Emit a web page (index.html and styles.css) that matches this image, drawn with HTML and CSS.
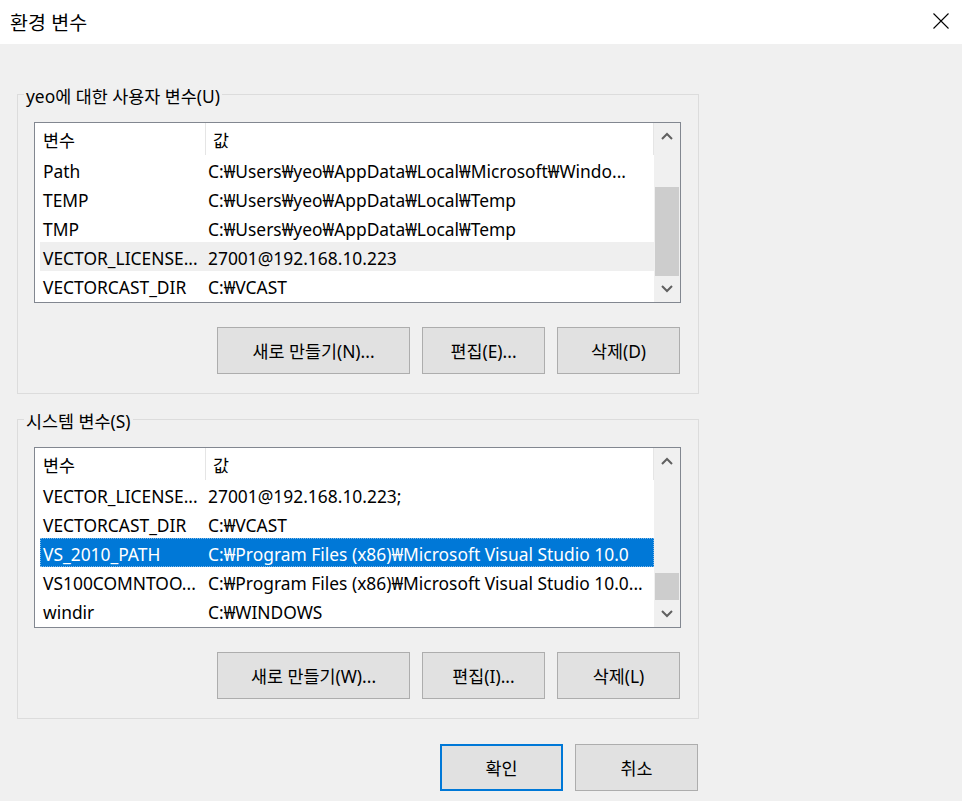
FILE: index.html
```
<!DOCTYPE html>
<html lang="ko">
<head>
<meta charset="utf-8">
<title>환경 변수</title>
<link rel="stylesheet" href="styles.css">
</head>
<body>
<div class="titlebar">
  <span class="title">환경 변수</span>
  <svg class="close" width="16" height="16" viewBox="0 0 16 16"><path d="M0.5 0.5 L15.5 15.5 M15.5 0.5 L0.5 15.5" stroke="#000" stroke-width="1.1" fill="none"/></svg>
</div>
<div class="content">
  <fieldset class="group">
    <legend>yeo에 대한 사용자 변수(U)</legend>
    <div class="list">
      <div class="list-main">
        <div class="row header"><span class="c1">변수</span><span class="c2">값</span><span class="hend"></span></div>
        <div class="row"><span class="c1">Path</span><span class="c2">C:₩Users₩yeo₩AppData₩Local₩Microsoft₩Windo...</span></div>
        <div class="row"><span class="c1">TEMP</span><span class="c2">C:₩Users₩yeo₩AppData₩Local₩Temp</span></div>
        <div class="row"><span class="c1">TMP</span><span class="c2">C:₩Users₩yeo₩AppData₩Local₩Temp</span></div>
        <div class="row hover"><span class="c1">VECTOR_LICENSE...</span><span class="c2">27001@192.168.10.223</span></div>
        <div class="row"><span class="c1">VECTORCAST_DIR</span><span class="c2">C:₩VCAST</span></div>
      </div>
      <div class="scrollbar">
        <div class="sb-btn"><svg width="12" height="8" viewBox="0 0 12 8"><path d="M1 7 L6 2 L11 7" stroke="#606060" stroke-width="2" fill="none"/></svg></div>
        <div class="sb-track end"><div class="thumb t1"></div></div>
        <div class="sb-btn"><svg width="12" height="8" viewBox="0 0 12 8"><path d="M1 1 L6 6 L11 1" stroke="#606060" stroke-width="2" fill="none"/></svg></div>
      </div>
    </div>
    <div class="btnrow">
      <button class="btn wide">새로 만들기(N)...</button>
      <button class="btn">편집(E)...</button>
      <button class="btn">삭제(D)</button>
    </div>
  </fieldset>

  <fieldset class="group second">
    <legend>시스템 변수(S)</legend>
    <div class="list">
      <div class="list-main">
        <div class="row header"><span class="c1">변수</span><span class="c2">값</span><span class="hend"></span></div>
        <div class="row"><span class="c1">VECTOR_LICENSE...</span><span class="c2">27001@192.168.10.223;</span></div>
        <div class="row"><span class="c1">VECTORCAST_DIR</span><span class="c2">C:₩VCAST</span></div>
        <div class="row selected"><span class="c1">VS_2010_PATH</span><span class="c2">C:₩Program Files (x86)₩Microsoft Visual Studio 10.0</span></div>
        <div class="row"><span class="c1">VS100COMNTOO...</span><span class="c2">C:₩Program Files (x86)₩Microsoft Visual Studio 10.0...</span></div>
        <div class="row"><span class="c1">windir</span><span class="c2">C:₩WINDOWS</span></div>
      </div>
      <div class="scrollbar">
        <div class="sb-btn"><svg width="12" height="8" viewBox="0 0 12 8"><path d="M1 7 L6 2 L11 7" stroke="#606060" stroke-width="2" fill="none"/></svg></div>
        <div class="sb-track end"><div class="thumb t2"></div></div>
        <div class="sb-btn"><svg width="12" height="8" viewBox="0 0 12 8"><path d="M1 1 L6 6 L11 1" stroke="#606060" stroke-width="2" fill="none"/></svg></div>
      </div>
    </div>
    <div class="btnrow">
      <button class="btn wide">새로 만들기(W)...</button>
      <button class="btn">편집(I)...</button>
      <button class="btn">삭제(L)</button>
    </div>
  </fieldset>

  <div class="dialog-buttons">
    <button class="btn default">확인</button>
    <button class="btn">취소</button>
  </div>
</div>
</body>
</html>
```

FILE: styles.css
```
* { box-sizing: border-box; }
html, body {
  margin: 0;
  padding: 0;
  background: #f0f0f0;
  width: 962px;
  height: 801px;
  overflow: hidden;
  font-family: "Noto Sans", "Noto Sans CJK KR", sans-serif;
  font-size: 17.4px;
  color: #000;
}
.titlebar {
  height: 44px;
  background: #fff;
  display: flex;
  align-items: center;
  justify-content: space-between;
  padding: 0 13px 0 10px;
}
.title {
  font-size: 19.5px;
  font-family: "Noto Sans CJK KR", sans-serif;
  padding-bottom: 1px;
}
.close { display: block; margin-top: -2px; }

.content {
  padding: 37px 0 0 17px;
}
.group {
  width: 682px;
  margin: 0;
  padding: 0 0 19px 0;
  border: 1px solid #dcdcdc;
  min-width: 0;
}
.group.second { margin-top: 12px; }
.group legend {
  margin-left: 6px;
  padding: 4px 2px 0 2px;
  line-height: 22px;
  font-size: 17.4px;
}
.list {
  margin: 15px 17px 0 16px;
  height: 181px;
  border: 1px solid #828790;
  background: #fff;
  display: flex;
}
.list-main {
  flex: 1;
  min-width: 0;
  overflow: hidden;
}
.row {
  display: flex;
  height: 29px;
  line-height: 27px;
  margin-left: 5px;
  white-space: nowrap;
  border: 1px solid transparent;
}
.row span { overflow: hidden; padding-top: 2px; }
.row .c1 { width: 161px; flex: none; padding-left: 2px; }
.row .c2 { flex: 1; padding-left: 6px; }
.row.header {
  height: 32px;
  line-height: 30px;
  margin-left: 0;
  padding-left: 5px;
  border: none;
}
.row.header span { padding-top: 2px; }
.row.header .c1 { width: 166px; padding-left: 3px; border-right: 1px solid #e5e5e5; }
.row.header .c2 { padding-left: 7px; }
.row.header .hend { width: 1px; background: #e5e5e5; }
.row.hover { background: #efefef; }
.row.selected {
  background: #0078d7;
  color: #fff;
  border: 1px dotted #7fb9e8;
}
.scrollbar {
  width: 26px;
  flex: none;
  background: #f0f0f0;
  display: flex;
  flex-direction: column;
}
.sb-btn {
  height: 26px;
  display: flex;
  align-items: center;
  justify-content: center;
  flex: none;
}
.sb-track {
  flex: 1;
  display: flex;
  flex-direction: column;
  justify-content: flex-end;
  padding: 0 1px;
}
.thumb { background: #cdcdcd; }
.thumb.t1 { height: 89px; }
.thumb.t2 { height: 27px; margin-bottom: 1px; }

.btnrow {
  display: flex;
  justify-content: flex-end;
  gap: 12px;
  margin: 24px 18px 0 16px;
}
.btn {
  width: 123px;
  height: 47px;
  background: #e1e1e1;
  border: 1px solid #adadad;
  font-family: "Noto Sans", "Noto Sans CJK KR", sans-serif;
  font-size: 17.4px;
  color: #000;
  padding: 0;
}
.btn.wide { width: 193px; }
.btn.default { border: 2px solid #0078d7; }
.dialog-buttons {
  width: 681px;
  display: flex;
  justify-content: flex-end;
  gap: 12px;
  margin-top: 25px;
}
```
